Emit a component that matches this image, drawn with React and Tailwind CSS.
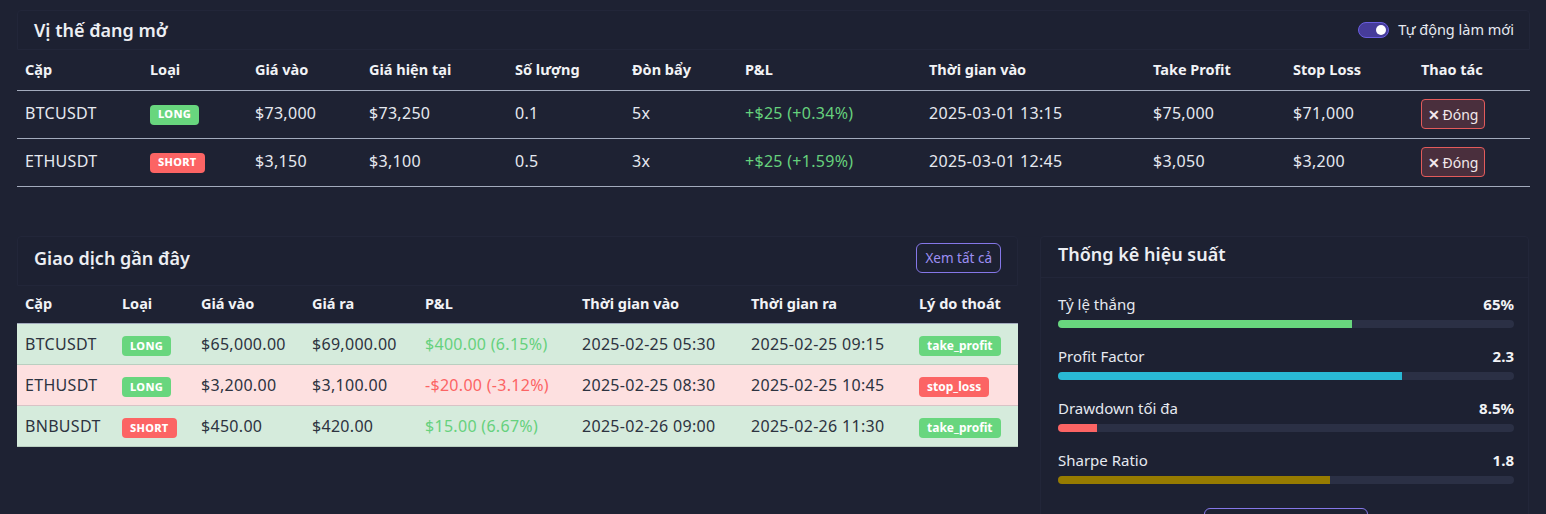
import React from "react";

const font = { fontFamily: '"Noto Sans", "Open Sans", sans-serif' };

function Badge({ kind }) {
  const long = kind === "LONG";
  return (
    <span
      className={`inline-flex h-5 items-center rounded px-2 text-[11px] font-extrabold tracking-[0.3px] text-white ${
        long ? "bg-[#68d67e]" : "bg-[#fc6464]"
      }`}
    >
      {kind}
    </span>
  );
}

function Reason({ r }) {
  const tp = r === "take_profit";
  return (
    <span
      className={`inline-flex h-5 items-center rounded px-2 text-[12px] font-bold tracking-[0px] text-white ${
        tp ? "bg-[#68d67e]" : "bg-[#fc6464]"
      }`}
    >
      {r}
    </span>
  );
}

const open = [
  ["BTCUSDT", "LONG", "$73,000", "$73,250", "0.1", "5x", "+$25 (+0.34%)", "2025-03-01 13:15", "$75,000", "$71,000"],
  ["ETHUSDT", "SHORT", "$3,150", "$3,100", "0.5", "3x", "+$25 (+1.59%)", "2025-03-01 12:45", "$3,050", "$3,200"],
];

const openCols = [
  ["Cặp", "w-[125px]"],
  ["Loại", "w-[105px]"],
  ["Giá vào", "w-[114px]"],
  ["Giá hiện tại", "w-[146px]"],
  ["Số lượng", "w-[117px]"],
  ["Đòn bẩy", "w-[113px]"],
  ["P&L", "w-[184px]"],
  ["Thời gian vào", "w-[224px]"],
  ["Take Profit", "w-[140px]"],
  ["Stop Loss", "w-[128px]"],
  ["Thao tác", ""],
];

const recent = [
  ["BTCUSDT", "LONG", "$65,000.00", "$69,000.00", "$400.00 (6.15%)", "2025-02-25 05:30", "2025-02-25 09:15", "take_profit", true],
  ["ETHUSDT", "LONG", "$3,200.00", "$3,100.00", "-$20.00 (-3.12%)", "2025-02-25 08:30", "2025-02-25 10:45", "stop_loss", false],
  ["BNBUSDT", "SHORT", "$450.00", "$420.00", "$15.00 (6.67%)", "2025-02-26 09:00", "2025-02-26 11:30", "take_profit", true],
];

const recentCols = [
  ["Cặp", "w-[97px]"],
  ["Loại", "w-[79px]"],
  ["Giá vào", "w-[111px]"],
  ["Giá ra", "w-[113px]"],
  ["P&L", "w-[157px]"],
  ["Thời gian vào", "w-[169px]"],
  ["Thời gian ra", "w-[168px]"],
  ["Lý do thoát", ""],
];

const stats = [
  ["Tỷ lệ thắng", "65%", 64.5, "bg-[#68d67e]"],
  ["Profit Factor", "2.3", 75.4, "bg-[#29b9d5]"],
  ["Drawdown tối đa", "8.5%", 8.5, "bg-[#fc6464]"],
  ["Sharpe Ratio", "1.8", 59.6, "bg-[#967b00]"],
];

export default function App() {
  return (
    <div className="h-[514px] overflow-hidden bg-[#1e2233] px-[17px] pt-[10px] text-[#e6e9f0]" style={font}>
      {/* Open positions */}
      <div className="w-[1513px]">
        <div className="flex h-[40px] items-center justify-between rounded-t border border-[#222639] bg-[#1d2132] pl-4 pr-[15px]">
          <h2 className="text-[18px] font-semibold text-[#eceef3]">Vị thế đang mở</h2>
          <div className="flex items-center gap-[9px]">
            <div className="flex h-4 w-[31px] items-center justify-end rounded-full border border-[#6a5ee0] bg-[#463c9a] pr-[2px]">
              <div className="h-[10px] w-[10px] rounded-full bg-white" />
            </div>
            <span className="text-[14.5px] text-[#e6e9f0]">Tự động làm mới</span>
          </div>
        </div>
        <table className="w-full table-fixed border-collapse text-left">
          <thead>
            <tr className="h-10 border-b border-[#a3abbd]">
              {openCols.map(([h, w]) => (
                <th key={h} className={`${w} px-2 text-[14.5px] font-bold text-[#f2f3f6]`}>
                  {h}
                </th>
              ))}
            </tr>
          </thead>
          <tbody>
            {open.map((r) => (
              <tr key={r[0]} className="h-12 border-b border-[#a3abbd] text-[16px] tracking-[0.3px]">
                <td className="px-2 pb-[3px]">{r[0]}</td>
                <td className="px-2 pb-[3px]">
                  <Badge kind={r[1]} />
                </td>
                <td className="px-2 pb-[3px]">{r[2]}</td>
                <td className="px-2 pb-[3px]">{r[3]}</td>
                <td className="px-2 pb-[3px]">{r[4]}</td>
                <td className="px-2 pb-[3px]">{r[5]}</td>
                <td className="px-2 pb-[3px] text-[#66d17d]">{r[6]}</td>
                <td className="px-2 pb-[3px]">{r[7]}</td>
                <td className="px-2 pb-[3px]">{r[8]}</td>
                <td className="px-2 pb-[3px]">{r[9]}</td>
                <td className="px-2">
                  <button className="flex h-[30px] w-16 items-center justify-center gap-[3px] rounded border border-[#e35b5b] bg-[#4a2f3d] text-[14px] tracking-normal text-[#f2e9ec]">
                    <span className="text-[14px] font-black">✕</span>Đóng
                  </button>
                </td>
              </tr>
            ))}
          </tbody>
        </table>
      </div>

      <div className="mt-[49px] flex items-start gap-[22px]">
        {/* Recent trades */}
        <div className="w-[1001px]">
          <div className="flex h-[50px] items-center justify-between rounded-t border border-[#222639] bg-[#1d2132] pb-[5px] pl-4 pr-4">
            <h2 className="text-[18px] font-semibold text-[#eceef3]">Giao dịch gần đây</h2>
            <button className="h-[30px] rounded-md border border-[#8577e8] px-2 text-[13.5px] text-[#9d8ff3]">
              Xem tất cả
            </button>
          </div>
          <table className="w-full table-fixed border-collapse text-left">
            <thead>
              <tr className="h-[38px] border-b border-[#a3abbd]">
                {recentCols.map(([h, w]) => (
                  <th key={h} className={`${w} px-2 text-[14.5px] font-bold text-[#f2f3f6]`}>
                    {h}
                  </th>
                ))}
              </tr>
            </thead>
            <tbody>
              {recent.map((r) => (
                <tr
                  key={r[0]}
                  className={`h-[41px] border-b text-[16px] tracking-[0.3px] text-[#2d3340] ${
                    r[8] ? "border-[#b9cfc0] bg-[#d5ebdc]" : "border-[#d8c3c6] bg-[#fde0e0]"
                  }`}
                >
                  <td className="px-2">{r[0]}</td>
                  <td className="px-2">
                    <Badge kind={r[1]} />
                  </td>
                  <td className="px-2">{r[2]}</td>
                  <td className="px-2">{r[3]}</td>
                  <td className={`px-2 ${r[8] ? "text-[#66d17d]" : "text-[#fc6464]"}`}>{r[4]}</td>
                  <td className="px-2">{r[5]}</td>
                  <td className="px-2">{r[6]}</td>
                  <td className="px-2">
                    <Reason r={r[7]} />
                  </td>
                </tr>
              ))}
            </tbody>
          </table>
        </div>

        {/* Stats */}
        <div className="h-[300px] flex-1 rounded border border-[#222639] bg-[#1d2132]">
          <div className="flex h-[41px] items-center border-b border-[#222639] px-[17px] pb-[4px]">
            <h2 className="text-[18px] font-semibold text-[#eceef3]">Thống kê hiệu suất</h2>
          </div>
          <div className="flex flex-col gap-[17px] pl-[17px] pr-[14px] pt-[15px]">
            {stats.map(([label, val, pct, color]) => (
              <div key={label}>
                <div className="flex h-[24px] items-center justify-between">
                  <span className="text-[15px] text-[#e6e9f0]">{label}</span>
                  <span className="text-[15px] font-bold text-[#f2f3f6]">{val}</span>
                </div>
                <div className="mt-[3px] h-2 w-full overflow-hidden rounded-full bg-[#2b3045]">
                  <div className={`h-full ${color}`} style={{ width: `${pct}%` }} />
                </div>
              </div>
            ))}
            <div className="flex justify-center pt-[7px]">
              <button className="h-[34px] w-[164px] rounded-md border border-[#8577e8]" aria-label="Xem chi tiết" />
            </div>
          </div>
        </div>
      </div>
    </div>
  );
}
